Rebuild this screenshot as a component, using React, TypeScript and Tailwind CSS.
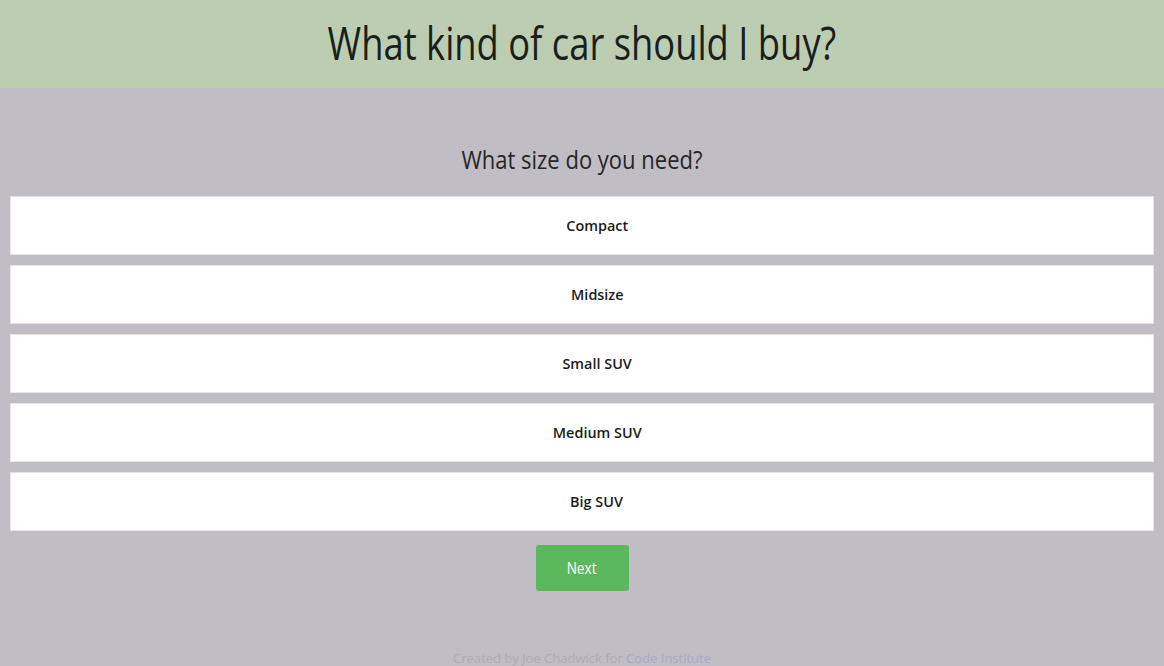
const sizes = ["Compact", "Midsize", "Small SUV", "Medium SUV", "Big SUV"];

export default function App() {
  return (
    <div className="min-h-[666px] bg-[#c1bdc4] font-['Open_Sans',sans-serif] text-[#222]">
      {/* Header */}
      <header className="h-[88px] bg-[#bccdb2] flex items-center justify-center">
        <h1 className="text-[46px] font-medium text-[#1a1f1b] scale-x-[0.79] whitespace-nowrap leading-none pb-[4px]">
          What kind of car should I buy?
        </h1>
      </header>

      <main className="pt-[59px] flex flex-col items-center">
        <h2 className="text-[25px] font-medium text-[#262626] scale-x-[0.88] whitespace-nowrap leading-none h-[49px]">
          What size do you need?
        </h2>

        <div className="w-full px-[10px] flex flex-col gap-[10px]">
          {sizes.map((s) => (
            <button
              key={s}
              className="h-[59px] w-full pl-[30px] bg-white border border-[#e6e4e8] text-[15px] font-semibold text-[#1c1c1c]"
            >
              <span className="inline-block scale-x-[0.96]">{s}</span>
            </button>
          ))}
        </div>

        <button className="mt-[14px] w-[93px] h-[46px] rounded-[3px] bg-[#5cb85c] text-white text-[16px]">
          <span className="inline-block scale-x-[0.85]">Next</span>
        </button>

        <p className="mt-[58px] text-[13px] text-[#b0aab3] whitespace-nowrap">
          Created by Joe Chadwick for <span className="text-[#a6a9c9]">Code Institute</span>
        </p>
      </main>
    </div>
  );
}
